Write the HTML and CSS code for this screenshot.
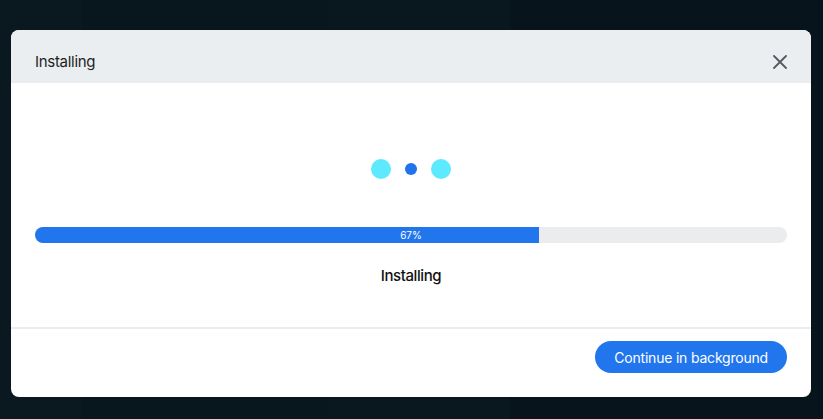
FILE: index.html
```html
<!DOCTYPE html>
<html>
<head>
<meta charset="utf-8">
<link rel="stylesheet" href="styles.css">
</head>
<body>
<div class="backdrop">
  <div class="modal">
    <div class="modal-header">
      <span class="modal-title">Installing</span>
      <button class="close-btn" aria-label="Close">
        <svg width="14" height="14" viewBox="0 0 14 14"><path d="M1 1L13 13M13 1L1 13" stroke="#555a60" stroke-width="1.8" stroke-linecap="round"/></svg>
      </button>
    </div>
    <div class="modal-body">
      <div class="dots">
        <span class="dot dot-big"></span>
        <span class="dot dot-small"></span>
        <span class="dot dot-big"></span>
      </div>
      <div class="progress">
        <div class="progress-fill" style="width: 67%"></div>
        <span class="progress-label">67%</span>
      </div>
      <div class="status">Installing</div>
    </div>
    <div class="modal-footer">
      <button class="primary-btn">Continue in background</button>
    </div>
  </div>
</div>
</body>
</html>
```

FILE: styles.css
```css
* { box-sizing: border-box; }
html, body {
  margin: 0;
  padding: 0;
  height: 100%;
}
body {
  background: #07151d;
  font-family: Inter, "Noto Sans", sans-serif;
}
.backdrop {
  height: 419px;
  padding: 30px 12px 0 11px;
  background:
    linear-gradient(90deg, #0a1820 0 10%, #08161e 10% 40%, #09171f 40% 62%, #07141c 62% 100%);
}
.modal {
  width: 800px;
  height: 367px;
  background: #fff;
  border-radius: 8px;
  overflow: hidden;
  display: flex;
  flex-direction: column;
}
.modal-header {
  height: 53px;
  background: #ebeef1;
  display: flex;
  align-items: center;
  justify-content: space-between;
  padding: 10px 23px 0 24px;
}
.modal-title {
  font-size: 15px;
  color: #1d1f22;
  letter-spacing: -0.3px;
}
.close-btn {
  border: 0;
  background: transparent;
  padding: 0;
  width: 16px;
  height: 16px;
  display: flex;
  align-items: center;
  justify-content: center;
}
.modal-body {
  height: 246px;
  padding: 76px 24px 0 24px;
  display: flex;
  flex-direction: column;
  align-items: center;
  border-bottom: 2px solid #e9edf1;
}
.dots {
  display: flex;
  align-items: center;
  gap: 14px;
  height: 20px;
}
.dot {
  display: block;
  border-radius: 50%;
}
.dot-big {
  width: 20px;
  height: 20px;
  background: #5de9fe;
}
.dot-small {
  width: 12px;
  height: 12px;
  background: #2173ea;
}
.progress {
  position: relative;
  margin-top: 48px;
  width: 752px;
  height: 16px;
  background: #ebecee;
  border-radius: 8px;
  overflow: hidden;
}
.progress-fill {
  height: 100%;
  background: #2176ee;
}
.progress-label {
  position: absolute;
  left: 0;
  right: 0;
  top: 0;
  line-height: 16px;
  text-align: center;
  font-size: 10px;
  color: #fff;
}
.status {
  margin-top: 23px;
  font-size: 15px;
  font-weight: 500;
  color: #111;
  letter-spacing: -0.4px;
}
.modal-footer {
  flex: 1;
  display: flex;
  justify-content: flex-end;
  align-items: flex-start;
  padding: 12px 24px 0 0;
}
.primary-btn {
  height: 32px;
  padding: 0 19px;
  border: 0;
  border-radius: 16px;
  background: #2176ee;
  color: #fff;
  font-family: Inter, "Noto Sans", sans-serif;
  font-size: 14px;
  letter-spacing: -0.2px;
}
```
